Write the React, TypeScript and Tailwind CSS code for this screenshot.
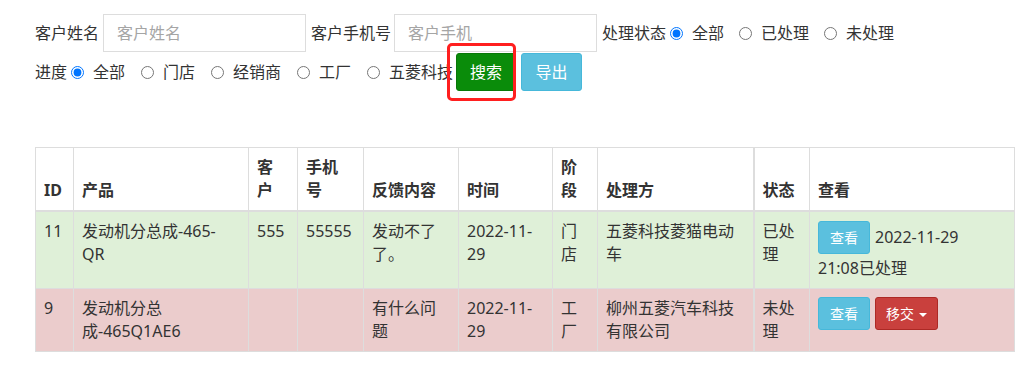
import React from 'react'

const FONT = "font-['Noto_Sans','Noto_Sans_CJK_SC',sans-serif]"

type Row = {
  id: string
  product: string[]
  customer: string
  phone: string
  feedback: string
  time: string
  stage: string
  handler: string
  status: string
  done: boolean
}

const ROWS: Row[] = [
  {
    id: '11',
    product: ['发动机分总成-465-', 'QR'],
    customer: '555',
    phone: '55555',
    feedback: '发动不了了。',
    time: '2022-11-29',
    stage: '门店',
    handler: '五菱科技菱猫电动车',
    status: '已处理',
    done: true,
  },
  {
    id: '9',
    product: ['发动机分总', '成-465Q1AE6'],
    customer: '',
    phone: '',
    feedback: '有什么问题',
    time: '2022-11-29',
    stage: '工厂',
    handler: '柳州五菱汽车科技有限公司',
    status: '未处理',
    done: false,
  },
]

function Radio({ label, checked, name, gap }: { label: string; checked?: boolean; name: string; gap: string }) {
  return (
    <label className={`inline-flex items-center ${gap}`}>
      <input type="radio" name={name} defaultChecked={checked} className="m-0 w-[13px] h-[13px]" />
      <span className="ml-[9px]">{label}</span>
    </label>
  )
}

function ViewButton({ extra = '' }: { extra?: string }) {
  return (
    <button className={`inline-block px-[11px] py-[5px] text-[14px] leading-[21px] text-white bg-[#5bc0de] border border-[#46b8da] rounded-[3px] align-baseline ${extra}`}>
      查看
    </button>
  )
}

export default function App() {
  const th = 'border border-[#ddd] border-b-2 px-[8px] py-[8px] align-bottom text-left font-bold'
  const td = 'border border-[#ddd] px-[8px] py-[8px] align-top'

  return (
    <div className={`${FONT} text-[16px] leading-[23px] text-[#333] bg-white min-h-[369px] pt-[14px] pl-[35px]`}>
      {/* 查询条件 */}
      <div className="flex items-center h-[38px]">
        <span>客户姓名</span>
        <input
          placeholder="客户姓名"
          className="ml-[4px] w-[203px] h-[38px] border border-[#ddd] px-[13px] text-[16px] placeholder-[#a5a5a5] outline-none"
        />
        <span className="ml-[5px]">客户手机号</span>
        <input
          placeholder="客户手机"
          className="ml-[3px] w-[203px] h-[38px] border border-[#ddd] px-[13px] text-[16px] placeholder-[#a5a5a5] outline-none"
        />
        <span className="ml-[5px]">处理状态</span>
        <Radio name="status" label="全部" checked gap="ml-[4px]" />
        <Radio name="status" label="已处理" gap="ml-[15px]" />
        <Radio name="status" label="未处理" gap="ml-[15px]" />
      </div>

      <div className="flex items-center h-[38px] mt-[1px]">
        <span>进度</span>
        <Radio name="stage" label="全部" checked gap="ml-[4px]" />
        <Radio name="stage" label="门店" gap="ml-[16px]" />
        <Radio name="stage" label="经销商" gap="ml-[16px]" />
        <Radio name="stage" label="工厂" gap="ml-[16px]" />
        <Radio name="stage" label="五菱科技" gap="ml-[16px]" />
        <span className="relative ml-[3px]">
          <button className="h-[38px] w-[60px] text-white bg-[#0a8c0a] border border-[#087808] rounded-[3px]">
            搜索
          </button>
          <span className="absolute left-[-9px] top-[-10px] w-[69px] h-[58px] border-[3px] border-[#ff1f1f] rounded-[5px] pointer-events-none" />
        </span>
        <button className="ml-[5px] h-[38px] w-[61px] text-white bg-[#5bc0de] border border-[#46b8da] rounded-[3px]">
          导出
        </button>
      </div>

      {/* 列表 */}
      <table className="mt-[56px] w-[979px] table-fixed border-collapse">
        <colgroup>
          <col className="w-[38px]" />
          <col className="w-[175px]" />
          <col className="w-[49px]" />
          <col className="w-[66px]" />
          <col className="w-[95px]" />
          <col className="w-[94px]" />
          <col className="w-[45px]" />
          <col className="w-[156px]" />
          <col className="w-[56px]" />
          <col className="w-[205px]" />
        </colgroup>
        <thead>
          <tr>
            <th className={th}>ID</th>
            <th className={th}>产品</th>
            <th className={th}>客<br />户</th>
            <th className={th}>手机<br />号</th>
            <th className={th}>反馈内容</th>
            <th className={th}>时间</th>
            <th className={th}>阶<br />段</th>
            <th className={th}>处理方</th>
            <th className={`${th} border-l-2`}>状态</th>
            <th className={th}>查看</th>
          </tr>
        </thead>
        <tbody>
          {ROWS.map(r => (
            <tr key={r.id} className={r.done ? 'bg-[#dff0d8]' : 'bg-[#ebcccc]'}>
              <td className={td}>{r.id}</td>
              <td className={td}>
                {r.product[0]}
                <br />
                {r.product[1]}
              </td>
              <td className={td}>{r.customer}</td>
              <td className={td}>{r.phone}</td>
              <td className={td}>{r.feedback}</td>
              <td className={td}>{r.time}</td>
              <td className={td}>{r.stage}</td>
              <td className={td}>{r.handler}</td>
              <td className={`${td} border-l-2`}>{r.status}</td>
              <td className={td}>
                {r.done ? (
                  <>
                    <ViewButton extra="mt-[1px] mb-[3px]" />
                    <span className="ml-[5px]">
                      2022-11-29 <span className="whitespace-nowrap">21:08已处理</span>
                    </span>
                  </>
                ) : (
                  <>
                    <ViewButton />
                    <button className="ml-[5px] inline-block px-[10px] py-[5px] text-[14px] leading-[21px] text-white bg-[#c9403d] border border-[#ac2925] rounded-[3px] align-baseline">
                      移交
                      <span className="ml-[5px] inline-block w-0 h-0 border-x-[4px] border-x-transparent border-t-[4px] border-t-white align-middle" />
                    </button>
                  </>
                )}
              </td>
            </tr>
          ))}
        </tbody>
      </table>
    </div>
  )
}
